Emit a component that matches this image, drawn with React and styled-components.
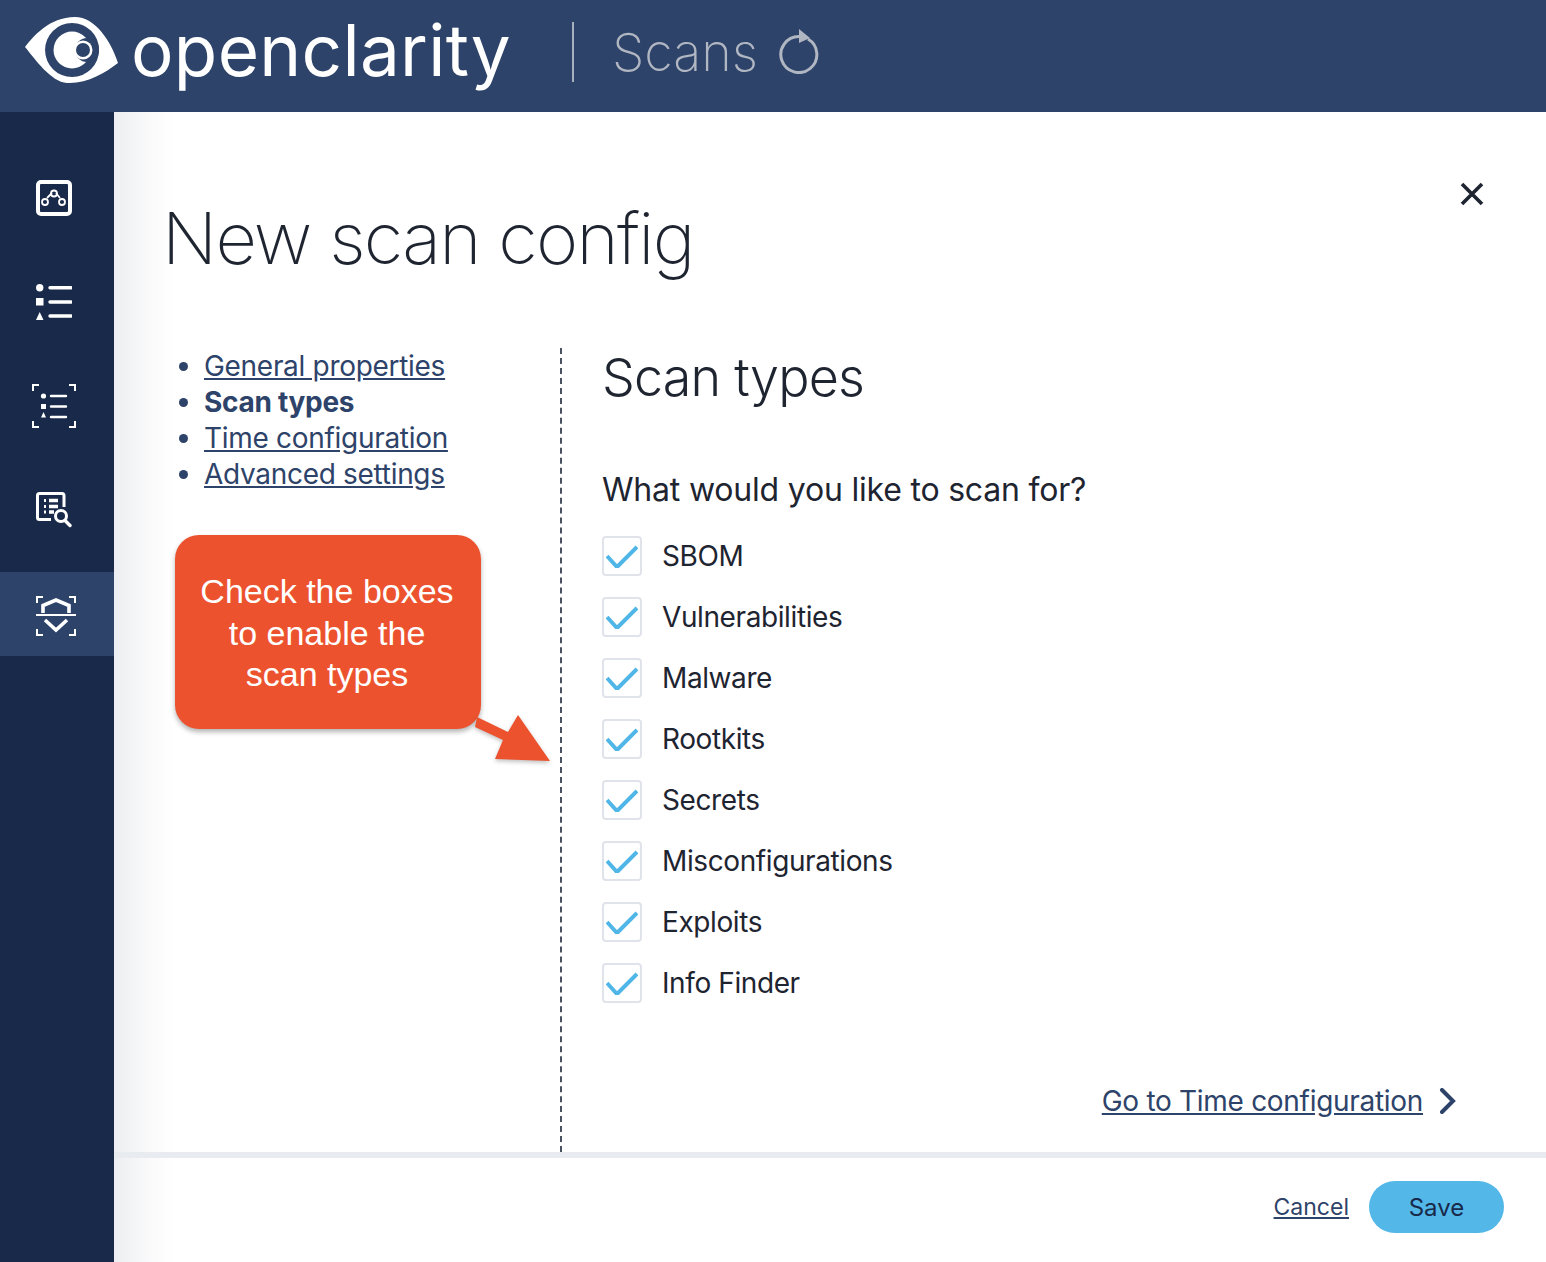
import styled, { createGlobalStyle } from "styled-components"

const GlobalStyle = createGlobalStyle`
    html, body {
        margin: 0;
        padding: 0;
        background: #fff;
        font-family: Inter, "Liberation Sans", sans-serif;
    }
`

const SCAN_TYPES = ["SBOM", "Vulnerabilities", "Malware", "Rootkits", "Secrets", "Misconfigurations", "Exploits", "Info Finder"]

const Logo = () => (
    <LogoSvg viewBox="0 0 94 68" width="94" height="68">
        <path fillRule="evenodd" fill="#fff" d="M0 30 C8 20 24 0 50 0 C70 0 86 24 93 46 C80 56 62 67 42 66 C26 65 10 42 0 30 Z M47 6 A27 27 0 1 0 47.1 60 A27 27 0 1 0 47 6 Z" />
        <circle cx="47" cy="33" r="18.5" fill="#fff" />
        <circle cx="62" cy="33" r="12" fill="#2e4369" />
        <circle cx="58" cy="33" r="9.5" fill="#fff" />
        <circle cx="58" cy="33" r="7" fill="#2e4369" />
    </LogoSvg>
)

const RefreshIcon = () => (
    <RefreshSvg viewBox="0 0 42 46" width="42" height="46" fill="none">
        <path d="M21 8.5 A18 18 0 1 0 30 11" stroke="#b0b6c2" strokeWidth="3" />
        <path d="M21 1 L32 10 L21 15 Z" fill="#b0b6c2" />
    </RefreshSvg>
)

const TopologyIcon = () => (
    <svg viewBox="0 0 36 36" width="36" height="36" fill="none" stroke="#fff">
        <rect x="2" y="2" width="32" height="32" rx="3" strokeWidth="4" />
        <path d="M11 18 L16 13 M20 13 L24 18" strokeWidth="1.8" />
        <circle cx="9" cy="22" r="3" strokeWidth="1.8" />
        <circle cx="18" cy="13.5" r="3" strokeWidth="1.8" />
        <circle cx="26" cy="22" r="3" strokeWidth="1.8" />
    </svg>
)

const ListIcon = () => (
    <svg viewBox="0 0 36 36" width="36" height="36">
        <circle cx="3.7" cy="3.7" r="3.7" fill="#fff" />
        <rect x="0" y="14" width="7.5" height="7.5" fill="#fff" />
        <path d="M3.7 28 L7.5 36 L0 36 Z" fill="#fff" />
        <path d="M14 3.7 H35 M14 18 H35 M14 32 H35" stroke="#fff" strokeWidth="3.4" strokeLinecap="round" />
    </svg>
)

const ScanListIcon = () => (
    <svg viewBox="0 0 44 44" width="44" height="44">
        <path d="M1 7 V1 H7 M37 1 H43 V7 M1 37 V43 H7 M37 43 H43 V37" fill="none" stroke="#fff" strokeWidth="2" />
        <circle cx="11.5" cy="12" r="2.6" fill="#fff" />
        <rect x="9" y="20" width="5" height="5" fill="#fff" />
        <path d="M11.5 28 L14 33.5 L9 33.5 Z" fill="#fff" />
        <path d="M19 12 H34 M19 22.5 H34 M19 33 H34" stroke="#fff" strokeWidth="2.4" strokeLinecap="round" />
    </svg>
)

const FindingsIcon = () => (
    <svg viewBox="0 0 36 36" width="36" height="36" fill="none" stroke="#fff">
        <path d="M15 27.5 H3.5 Q1.5 27.5 1.5 25.5 V3.5 Q1.5 1.5 3.5 1.5 H26 Q28 1.5 28 3.5 V15" strokeWidth="3" />
        <path d="M8 8.5 H10 M8 14.5 H10 M8 20 H10" strokeWidth="3" />
        <path d="M13 8.5 H22 M13 14.5 H22 M13 20 H18" strokeWidth="3.4" />
        <circle cx="25" cy="24" r="5.5" strokeWidth="3" />
        <path d="M29 28.5 L34 33.5" strokeWidth="3.4" strokeLinecap="round" />
    </svg>
)

const ShieldScanIcon = () => (
    <svg viewBox="0 0 40 44" width="40" height="44" fill="none" stroke="#fff">
        <path d="M1 11 V5 H7 M33 5 H39 V11 M1 37 V43 H7 M33 43 H39 V37" strokeWidth="2" />
        <path d="M0 23 H40" strokeWidth="2" />
        <path d="M7 21 V13.5 L20 8 L33 13.5 V21" strokeWidth="3.6" />
        <path d="M9 28 L20 38 L31 28" strokeWidth="3.6" />
    </svg>
)

const CloseIcon = () => (
    <svg viewBox="0 0 24 24" width="24" height="24">
        <path d="M2 2 L22 22 M22 2 L2 22" stroke="#1e2430" strokeWidth="3.6" />
    </svg>
)

const CheckIcon = () => (
    <svg viewBox="0 0 32 24" width="32" height="24" fill="none">
        <path d="M1 12 L11 23 L31 3" stroke="#4fb6e7" strokeWidth="4" />
    </svg>
)

const ChevronIcon = () => (
    <svg viewBox="0 0 18 26" width="18" height="26" fill="none">
        <path d="M3 2 L14 13 L3 24" stroke="#2e4369" strokeWidth="4" strokeLinecap="round" />
    </svg>
)

const Arrow = () => (
    <ArrowSvg viewBox="0 0 84 56" width="84" height="56">
        <path d="M5 4 L36 19 L46 2 L78 48 L23 46 L31 27 L3 14 Z" fill="#ec522e" />
    </ArrowSvg>
)

const App = () => {
    return (
        <Page>
            <GlobalStyle />
            <Header>
                <Logo />
                <Brand>openclarity</Brand>
                <HeaderDivider />
                <HeaderTitle>Scans</HeaderTitle>
                <RefreshIcon />
            </Header>
            <Body>
                <Sidebar>
                    <NavItem><TopologyIcon /></NavItem>
                    <NavItem><ListIcon /></NavItem>
                    <NavItem><ScanListIcon /></NavItem>
                    <NavItem><FindingsIcon /></NavItem>
                    <NavItem $active><ShieldScanIcon /></NavItem>
                </Sidebar>
                <Main>
                    <TitleRow>
                        <Title>New scan config</Title>
                        <CloseButton><CloseIcon /></CloseButton>
                    </TitleRow>
                    <Content>
                        <LeftColumn>
                            <Steps>
                                <li><StepLink href="#">General properties</StepLink></li>
                                <Current>Scan types</Current>
                                <li><StepLink href="#">Time configuration</StepLink></li>
                                <li><StepLink href="#">Advanced settings</StepLink></li>
                            </Steps>
                            <Callout>
                                Check the boxes<br />to enable the<br />scan types
                                <Arrow />
                            </Callout>
                        </LeftColumn>
                        <RightColumn>
                            <SectionTitle>Scan types</SectionTitle>
                            <Question>What would you like to scan for?</Question>
                            <Options>
                                {SCAN_TYPES.map((name) => (
                                    <Option key={name}>
                                        <Box><CheckIcon /></Box>
                                        {name}
                                    </Option>
                                ))}
                            </Options>
                            <NextRow>
                                <NextLink href="#">Go to Time configuration</NextLink>
                                <ChevronIcon />
                            </NextRow>
                        </RightColumn>
                    </Content>
                    <Footer>
                        <CancelLink href="#">Cancel</CancelLink>
                        <SaveButton>Save</SaveButton>
                    </Footer>
                </Main>
            </Body>
        </Page>
    )
}

export default App

const Page = styled.div`
    width: 1546px;
    height: 1262px;
    display: flex;
    flex-direction: column;
    overflow: hidden;
`

const Header = styled.header`
    height: 112px;
    flex: none;
    display: flex;
    align-items: center;
    background: #2e4369;
    padding-left: 25px;
    box-sizing: border-box;
`

const LogoSvg = styled.svg`
    flex: none;
    margin: -10px 12px 0 0;
`

const Brand = styled.div`
    font-size: 71px;
    line-height: 80px;
    letter-spacing: 0.3px;
    color: #fff;
    width: 441px;
    margin-top: -12px;
`

const HeaderDivider = styled.div`
    width: 2px;
    height: 60px;
    background: #a9b0bd;
    margin-right: 38px;
    margin-top: -8px;
`

const HeaderTitle = styled.div`
    font-size: 52px;
    font-weight: 200;
    color: #b0b6c2;
    margin-right: 20px;
    margin-top: -8px;
`

const RefreshSvg = styled.svg`
    margin-top: -10px;
`

const Body = styled.div`
    flex: 1;
    display: flex;
    min-height: 0;
`

const Sidebar = styled.nav`
    width: 114px;
    flex: none;
    background: #18294a;
    padding-top: 44px;
    box-sizing: border-box;
    display: flex;
    flex-direction: column;
    gap: 20px;
`

const NavItem = styled.div`
    height: 84px;
    box-sizing: border-box;
    display: flex;
    align-items: center;
    justify-content: center;
    padding-right: ${(p) => (p.$active ? "2px" : "6px")};
    background: ${(p) => (p.$active ? "#2e4369" : "transparent")};
`

const Main = styled.main`
    flex: 1;
    display: flex;
    flex-direction: column;
    min-width: 0;
    background: linear-gradient(90deg, #eceef1 0, #fafafb 36px, #fff 60px);
`

const TitleRow = styled.div`
    height: 236px;
    flex: none;
    display: flex;
    justify-content: space-between;
    align-items: flex-start;
    padding: 70px 62px 0 48px;
    box-sizing: border-box;
`

const Title = styled.h1`
    margin: 16px 0 0;
    font-size: 72px;
    line-height: 80px;
    font-weight: 200;
    letter-spacing: -1.7px;
    color: #1e2430;
`

const CloseButton = styled.div`
    line-height: 0;
`

const Content = styled.div`
    flex: 1;
    display: flex;
    min-height: 0;
`

const LeftColumn = styled.div`
    width: 448px;
    flex: none;
    box-sizing: border-box;
    border-right: 2px dashed #4a5160;
    padding: 0 0 0 61px;
`

const Steps = styled.ul`
    margin: 0;
    padding: 0 0 0 29px;
    font-size: 28px;
    line-height: 36px;
    letter-spacing: -0.3px;
    color: #2e4369;
`

const StepLink = styled.a`
    color: #2e4369;
    text-decoration: underline;
`

const Current = styled.li`
    font-weight: 700;
    color: #2e4369;
`

const Callout = styled.div`
    position: relative;
    margin-top: 43px;
    width: 306px;
    height: 194px;
    box-sizing: border-box;
    padding: 36px 2px 0 0;
    background: #ec522e;
    border-radius: 24px;
    box-shadow: 0 3px 5px rgba(0, 0, 0, 0.3);
    color: #fff;
    font-family: "Liberation Sans", sans-serif;
    font-size: 34px;
    line-height: 41.5px;
    text-align: center;
`

const ArrowSvg = styled.svg`
    position: absolute;
    left: 297px;
    top: 178px;
    filter: drop-shadow(0 2px 2px rgba(0, 0, 0, 0.25));
`

const RightColumn = styled.div`
    flex: 1;
    display: flex;
    flex-direction: column;
    padding: 0 89px 0 40px;
    min-width: 0;
`

const SectionTitle = styled.h2`
    margin: 0;
    font-size: 52px;
    line-height: 60px;
    font-weight: 300;
    letter-spacing: -0.8px;
    color: #1e2430;
`

const Question = styled.div`
    margin-top: 62px;
    font-size: 32px;
    line-height: 40px;
    letter-spacing: -0.2px;
    color: #1e2430;
`

const Options = styled.div`
    margin-top: 26px;
    display: flex;
    flex-direction: column;
    gap: 21px;
`

const Option = styled.label`
    height: 40px;
    display: flex;
    align-items: center;
    gap: 20px;
    font-size: 28px;
    letter-spacing: -0.4px;
    color: #1e2430;
`

const Box = styled.span`
    width: 40px;
    height: 40px;
    box-sizing: border-box;
    border: 2px solid #e1e3ea;
    border-radius: 4px;
    display: flex;
    align-items: center;
    justify-content: center;
`

const NextRow = styled.div`
    margin-top: auto;
    margin-bottom: 34px;
    display: flex;
    justify-content: flex-end;
    align-items: center;
    gap: 16px;
`

const NextLink = styled.a`
    font-size: 28px;
    letter-spacing: -0.3px;
    color: #2e4369;
    text-decoration: underline;
`

const Footer = styled.footer`
    height: 110px;
    flex: none;
    box-sizing: border-box;
    border-top: 6px solid #e8ecf1;
    display: flex;
    justify-content: flex-end;
    align-items: center;
    gap: 20px;
    padding: 0 42px 6px 0;
`

const CancelLink = styled.a`
    font-size: 23px;
    color: #2e4369;
    text-decoration: underline;
`

const SaveButton = styled.button`
    width: 135px;
    height: 52px;
    border: none;
    border-radius: 26px;
    background: #53b7e8;
    color: #18294a;
    font-family: Inter, sans-serif;
    font-size: 24px;
`
